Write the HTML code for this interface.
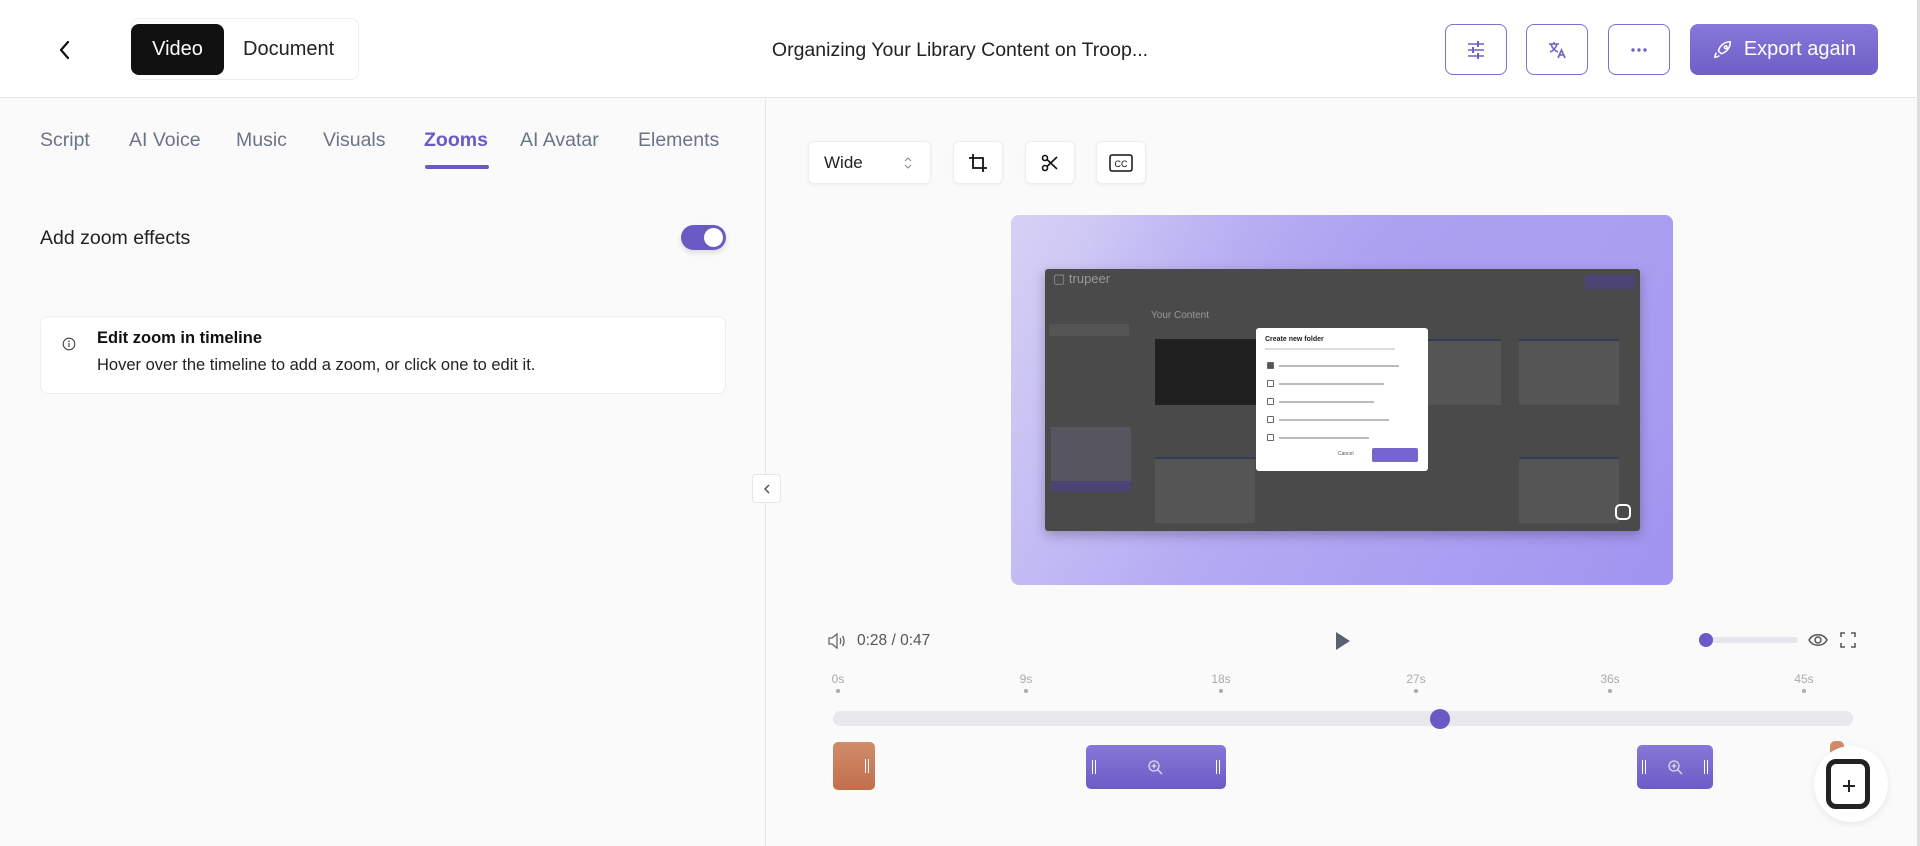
<!DOCTYPE html>
<html><head><meta charset="utf-8">
<style>
*{box-sizing:border-box;margin:0;padding:0}
body{width:1920px;height:846px;overflow:hidden;background:#fafafa;font-family:"Liberation Sans",sans-serif;color:#111;position:relative}
.a{position:absolute}
.hdr{left:0;top:0;width:1920px;height:98px;background:#fff;border-bottom:1px solid #e6e6e6}
.seg{left:131px;top:18px;width:228px;height:62px;border:1px solid #eee;border-radius:8px;background:#fff}
.vid{left:131px;top:24px;width:93px;height:51px;background:#111;border-radius:8px;color:#fff;font-size:20px;line-height:51px;text-align:center}
.doc{left:243px;top:24px;font-size:20px;line-height:51px;color:#222}
.title{left:700px;width:520px;top:25px;line-height:51px;text-align:center;font-size:19.5px;color:#222}
.ib{top:24px;width:62px;height:51px;border:1.5px solid #7e6fd3;border-radius:8px;background:#fff;display:flex;align-items:center;justify-content:center}
.exp{left:1690px;top:24px;width:188px;height:51px;border-radius:8px;background:linear-gradient(#8578d9,#6f5fc8);color:#fff;font-size:20px;display:flex;align-items:center;justify-content:center;gap:10px}
.tab{top:129px;font-size:19.5px;color:#6b7487}
.tool{top:141px;height:43px;width:50px;background:#fff;border:1px solid #eee;border-radius:6px;box-shadow:0 1px 3px rgba(0,0,0,.06);display:flex;align-items:center;justify-content:center}
.tick{top:672px;font-size:12px;color:#aaa;width:30px;text-align:center;margin-left:-15px}
.dot{top:689px;width:4px;height:4px;border-radius:2px;background:#aaa;margin-left:-2px}
.clip{background:linear-gradient(#8677d8,#6c5cc6);border-radius:5px}
.bar{width:2px;height:14px;border-left:1px solid #fff;border-right:1px solid #fff;width:4px}
.ln{position:absolute;left:12px;height:2px;background:#bbb}
.cb{position:absolute;left:11px;width:7px;height:7px;border:1px solid #666;border-radius:1px}
</style></head><body>
<div class="a hdr"></div>
<svg class="a" style="left:56px;top:39px" width="18" height="22" viewBox="0 0 18 22"><path d="M12 3L5 11l7 8" stroke="#111" stroke-width="2.2" fill="none" stroke-linecap="round" stroke-linejoin="round"/></svg>
<div class="a seg"></div>
<div class="a vid">Video</div>
<div class="a doc">Document</div>
<div class="a title">Organizing Your Library Content on Troop...</div>
<div class="a ib" style="left:1445px"><svg width="22" height="22" viewBox="0 0 22 22" stroke="#6f5fc8" stroke-width="1.6" fill="none"><path d="M3 5h16M3 11h16M3 17h16"/><path d="M13 2v6M8 8v6M13 14v6" stroke-width="2"/></svg></div>
<div class="a ib" style="left:1526px"><svg width="22" height="22" viewBox="0 0 22 22" stroke="#6f5fc8" stroke-width="1.6" fill="none"><path d="M3 5h10M8 3v2M5 5c1 4 4 7 7 8M11 5c-1 4-4 7-7 8"/><path d="M12 19l3.5-8 3.5 8M13.3 16h4.4"/></svg></div>
<div class="a ib" style="left:1608px"><svg width="22" height="6" viewBox="0 0 22 6" fill="#6f5fc8"><circle cx="5" cy="3" r="1.7"/><circle cx="11" cy="3" r="1.7"/><circle cx="17" cy="3" r="1.7"/></svg></div>
<div class="a exp"><svg width="22" height="22" viewBox="0 0 24 24" stroke="#fff" stroke-width="1.7" fill="none" stroke-linejoin="round"><path d="M5 15c-1.5 1.5-2 5-2 5s3.5-.5 5-2M9 15l-2-2c1-4 5-10 13-10 0 8-6 12-10 13z"/><circle cx="15" cy="9" r="1.5"/></svg>Export again</div>
<div class="a" style="left:1917px;top:0;width:3px;height:846px;background:#ddd"></div>

<div class="a" style="left:765px;top:99px;width:1px;height:747px;background:#e6e6e6"></div>
<div class="a tab" style="left:40px">Script</div>
<div class="a tab" style="left:129px">AI Voice</div>
<div class="a tab" style="left:236px">Music</div>
<div class="a tab" style="left:323px">Visuals</div>
<div class="a tab" style="left:424px;color:#6a5ac6;font-weight:bold">Zooms</div>
<div class="a" style="left:425px;top:165px;width:64px;height:4px;border-radius:2px;background:#6a5ac6"></div>
<div class="a tab" style="left:520px">AI Avatar</div>
<div class="a tab" style="left:638px">Elements</div>
<div class="a" style="left:40px;top:227px;font-size:19.5px;color:#222">Add zoom effects</div>
<div class="a" style="left:681px;top:225px;width:45px;height:25px;border-radius:13px;background:#6a5ac6;box-shadow:0 3px 6px rgba(0,0,0,.12)"><div class="a" style="right:3px;top:3px;width:19px;height:19px;border-radius:50%;background:#fff"></div></div>
<div class="a" style="left:40px;top:316px;width:686px;height:78px;background:#fff;border:1px solid #eee;border-radius:8px"></div>
<svg class="a" style="left:62px;top:337px" width="14" height="14" viewBox="0 0 14 14"><circle cx="7" cy="7" r="5.8" stroke="#444" stroke-width="1.1" fill="none"/><path d="M7 6v4" stroke="#444" stroke-width="1.2"/><circle cx="7" cy="4.2" r=".8" fill="#444"/></svg>
<div class="a" style="left:97px;top:329px;font-size:16.5px;font-weight:bold;color:#111">Edit zoom in timeline</div>
<div class="a" style="left:97px;top:356px;font-size:16.5px;color:#222">Hover over the timeline to add a zoom, or click one to edit it.</div>
<div class="a" style="left:752px;top:474px;width:29px;height:29px;background:#fff;border:1px solid #e6e6e6;border-radius:4px;display:flex;align-items:center;justify-content:center"><svg width="10" height="12" viewBox="0 0 10 12"><path d="M7 2L3 6l4 4" stroke="#555" stroke-width="1.5" fill="none"/></svg></div>

<div class="a tool" style="left:808px;width:123px;justify-content:flex-start;padding-left:15px;font-size:17px;color:#222">Wide<svg class="a" style="right:18px;top:14px" width="8" height="14" viewBox="0 0 8 14"><path d="M1 5l3-3 3 3M1 9l3 3 3-3" stroke="#888" fill="none"/></svg></div>
<div class="a tool" style="left:953px"><svg width="20" height="20" viewBox="0 0 20 20" stroke="#111" stroke-width="1.8" fill="none"><path d="M5 1v14h14M1 5h14v14"/></svg></div>
<div class="a tool" style="left:1025px"><svg width="20" height="20" viewBox="0 0 20 20" stroke="#111" stroke-width="1.6" fill="none"><circle cx="5" cy="5" r="2.5"/><circle cx="5" cy="15" r="2.5"/><path d="M7 6.5L17 16M7 13.5L17 4"/></svg></div>
<div class="a tool" style="left:1096px"><svg width="24" height="18" viewBox="0 0 24 18"><rect x="1" y="1" width="22" height="16" rx="2" stroke="#111" stroke-width="1.5" fill="none"/><text x="12" y="13" font-size="9" text-anchor="middle" font-family="Liberation Sans" fill="#111">CC</text></svg></div>

<div class="a" style="left:1011px;top:215px;width:662px;height:370px;border-radius:8px;background:radial-gradient(ellipse at 70% 20%,#a99ef0,transparent 60%),linear-gradient(120deg,#d6d1f5 0%,#b3aaf3 45%,#a093f0 100%)"></div>
<div class="a" style="left:1045px;top:269px;width:595px;height:262px;background:#4a4a4b;border-radius:3px;box-shadow:0 4px 12px rgba(0,0,0,.25);overflow:hidden">
 <div class="a" style="left:8px;top:2px;font-size:13px;color:#9a9a9a">▢ trupeer</div>
 <div class="a" style="left:540px;top:6px;width:50px;height:14px;background:#4b4575"></div>
 <div class="a" style="left:106px;top:41px;font-size:10px;color:#9a9a9a">Your Content</div>
 <div class="a" style="left:4px;top:55px;width:80px;height:12px;background:#555"></div>
 <div class="a" style="left:6px;top:158px;width:80px;height:60px;background:#575560"></div>
 <div class="a" style="left:6px;top:212px;width:80px;height:11px;background:#4b4575"></div>
 <div class="a" style="left:110px;top:70px;width:102px;height:66px;background:#202020"></div>
 <div class="a" style="left:360px;top:70px;width:96px;height:66px;background:#555;border-top:2px solid #333a55"></div>
 <div class="a" style="left:474px;top:70px;width:100px;height:66px;background:#555;border-top:2px solid #333a55"></div>
 <div class="a" style="left:110px;top:188px;width:100px;height:66px;background:#555;border-top:2px solid #333a55"></div>
 <div class="a" style="left:474px;top:188px;width:100px;height:66px;background:#555;border-top:2px solid #333a55"></div>
 <div class="a" style="left:211px;top:59px;width:172px;height:143px;background:#fff;border-radius:3px;overflow:hidden">
  <div class="a" style="left:9px;top:8px;font-size:7px;font-weight:bold;color:#222">Create new folder</div>
  <div class="a" style="left:9px;top:20px;width:130px;height:2px;background:#ddd"></div>
  <div class="cb" style="top:34px;background:#555"></div><div class="ln" style="left:23px;top:37px;width:120px"></div>
  <div class="cb" style="top:52px"></div><div class="ln" style="left:23px;top:55px;width:105px"></div>
  <div class="cb" style="top:70px"></div><div class="ln" style="left:23px;top:73px;width:95px"></div>
  <div class="cb" style="top:88px"></div><div class="ln" style="left:23px;top:91px;width:110px"></div>
  <div class="cb" style="top:106px"></div><div class="ln" style="left:23px;top:109px;width:90px"></div>
  <div class="a" style="left:82px;top:121px;width:24px;height:10px;font-size:5px;color:#555;line-height:10px">Cancel</div>
  <div class="a" style="left:116px;top:120px;width:46px;height:14px;background:#7565cc;border-radius:2px"></div>
 </div>
 <div class="a" style="left:570px;top:235px;width:16px;height:16px;border:2px solid #fff;border-radius:5px"></div>
</div>

<svg class="a" style="left:827px;top:632px" width="20" height="18" viewBox="0 0 20 18" stroke="#666" stroke-width="1.3" fill="none"><path d="M2 6h3l5-4v14l-5-4H2z"/><path d="M13 6c1 1.5 1 4.5 0 6M15.5 4c2 3 2 7 0 10"/></svg>
<div class="a" style="left:857px;top:632px;font-size:15.5px;color:#555">0:28 / 0:47</div>
<svg class="a" style="left:1334px;top:631px" width="18" height="20" viewBox="0 0 18 20"><path d="M2 1l14 9-14 9z" fill="#5b6172"/></svg>
<div class="a" style="left:1706px;top:637px;width:92px;height:6px;border-radius:3px;background:#e6e6ec"></div>
<div class="a" style="left:1699px;top:633px;width:14px;height:14px;border-radius:50%;background:#6a5ac6"></div>
<svg class="a" style="left:1808px;top:631px" width="20" height="18" viewBox="0 0 20 18" stroke="#555" stroke-width="1.5" fill="none"><path d="M1 9c4-7 14-7 18 0-4 7-14 7-18 0z"/><circle cx="10" cy="9" r="3"/></svg>
<svg class="a" style="left:1840px;top:632px" width="16" height="16" viewBox="0 0 16 16" stroke="#555" stroke-width="1.5" fill="none"><path d="M1 5V1h4M11 1h4v4M15 11v4h-4M5 15H1v-4"/></svg>

<div class="a tick" style="left:838px">0s</div><div class="a dot" style="left:838px"></div>
<div class="a tick" style="left:1026px">9s</div><div class="a dot" style="left:1026px"></div>
<div class="a tick" style="left:1221px">18s</div><div class="a dot" style="left:1221px"></div>
<div class="a tick" style="left:1416px">27s</div><div class="a dot" style="left:1416px"></div>
<div class="a tick" style="left:1610px">36s</div><div class="a dot" style="left:1610px"></div>
<div class="a tick" style="left:1804px">45s</div><div class="a dot" style="left:1804px"></div>

<div class="a" style="left:833px;top:711px;width:1020px;height:15px;border-radius:8px;background:#e7e7ec"></div>
<div class="a" style="left:1430px;top:709px;width:20px;height:20px;border-radius:50%;background:#6a5ac6"></div>

<div class="a" style="left:833px;top:742px;width:42px;height:48px;border-radius:5px;background:linear-gradient(#d08c6a,#c26f4c)"><div class="a bar" style="right:6px;top:17px"></div></div>
<div class="a clip" style="left:1086px;top:745px;width:140px;height:44px"><div class="a bar" style="left:6px;top:15px"></div><div class="a bar" style="right:6px;top:15px"></div><svg class="a" style="left:61px;top:14px" width="16" height="16" viewBox="0 0 16 16" stroke="#ddd" stroke-width="1.3" fill="none"><circle cx="7" cy="7" r="5"/><path d="M11 11l4 4M7 4.5v5M4.5 7h5"/></svg></div>
<div class="a clip" style="left:1637px;top:745px;width:76px;height:44px"><div class="a bar" style="left:5px;top:15px"></div><div class="a bar" style="right:5px;top:15px"></div><svg class="a" style="left:30px;top:14px" width="16" height="16" viewBox="0 0 16 16" stroke="#ddd" stroke-width="1.3" fill="none"><circle cx="7" cy="7" r="5"/><path d="M11 11l4 4M7 4.5v5M4.5 7h5"/></svg></div>
<div class="a" style="left:1830px;top:741px;width:14px;height:20px;border-radius:5px;background:#d08c6a"></div>
<div class="a" style="left:1814px;top:746px;width:74px;height:76px;border-radius:50%;background:#fff;box-shadow:0 2px 8px rgba(0,0,0,.08)"></div>
<div class="a" style="left:1826px;top:759px;width:44px;height:50px;border:5px solid #222;border-radius:10px;background:#fff"></div>
<svg class="a" style="left:1842px;top:779px" width="14" height="14" viewBox="0 0 14 14"><path d="M7 1v12M1 7h12" stroke="#222" stroke-width="2"/></svg>
</body></html>
